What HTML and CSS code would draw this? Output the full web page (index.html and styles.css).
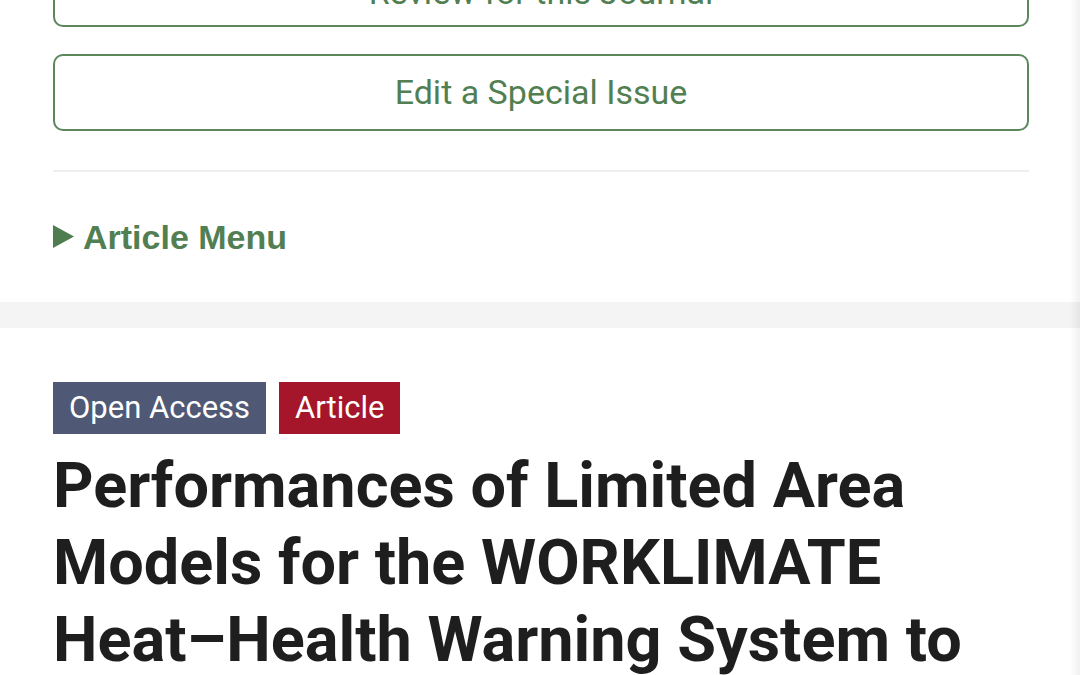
FILE: index.html
```html
<!DOCTYPE html>
<html>
<head>
  <title>Performances of Limited Area Models</title>
  <link rel="stylesheet" href="styles.css">
</head>
<body>
  <div class="journal-actions">
    <a class="outline-btn outline-btn-cut" href="#">Review for this Journal</a>
    <a class="outline-btn" href="#">Edit a Special Issue</a>

    <div class="divider"></div>

    <div class="article-menu">
      <svg class="menu-arrow" width="21" height="23" viewBox="0 0 21 23"><polygon points="0,0 21,11.5 0,23" fill="#4f7d4f"/></svg>
      <span>Article Menu</span>
    </div>
  </div>

  <div class="band"></div>

  <div class="article-head">
    <div class="badges">
      <span class="badge badge-access">Open Access</span>
      <span class="badge badge-type">Article</span>
    </div>
    <h1 class="article-title">Performances of Limited Area Models for the WORKLIMATE Heat–Health Warning System to Protect Worker’s Health and Productivity in Italy</h1>
  </div>

  <div class="edge-shade"></div>
</body>
</html>
```

FILE: styles.css
```css
:root {
  --green-text: #527f52;
  --green-border: #5b875b;
  --band-grey: #f4f4f4;
  --title-color: #1e1e1e;
}

body {
  margin: 0;
  font-family: Roboto, "Liberation Sans", sans-serif;
  background: #ffffff;
  overflow: hidden;
}

/* Sidebar-ish block with journal buttons */
.journal-actions {
  padding: 0 51px 45px 53px;
  margin-top: -50px;
}
.outline-btn {
  display: block;
  box-sizing: border-box;
  height: 77px;
  border: 2px solid var(--green-border);
  border-radius: 10px;
  color: var(--green-text);
  font-size: 34px;
  line-height: 73px;
  text-align: center;
  text-decoration: none;
  margin-bottom: 27px;
}
.outline-btn-cut { /* only its lower edge shows at the top of the view */
  line-height: 80px;
}
.divider {
  height: 2px;
  background: #eeeeee;
  margin-top: 39px;
}
.article-menu {
  display: flex;
  align-items: center;
  gap: 9px;
  margin-top: 45px;
  color: var(--green-text);
  font-family: "Liberation Sans", Arial, sans-serif;
  font-weight: bold;
  font-size: 34px;
  line-height: 40px;
}
.menu-arrow {
  display: block;
  margin-top: -1px;
}

.band {
  height: 26px;
  background: var(--band-grey);
}

/* Article header */
.article-head {
  padding: 54px 51px 0 53px;
}
.badges {
  display: flex;
  gap: 13px;
}
.badge {
  height: 52px;
  line-height: 52px;
  padding: 0 16px;
  font-size: 31px;
  color: #ffffff;
}
.badge-access {
  background: #4f5875;
}
.badge-type {
  background: #a6162a;
}
.article-title {
  margin: 13px 0 0;
  font-size: 63px;
  line-height: 77px;
  font-weight: bold;
  color: var(--title-color);
}

.edge-shade {
  position: fixed;
  top: 0;
  right: 0;
  bottom: 0;
  width: 10px;
  background: linear-gradient(to right, rgba(0,0,0,0), rgba(0,0,0,0.06));
  pointer-events: none;
}
```
